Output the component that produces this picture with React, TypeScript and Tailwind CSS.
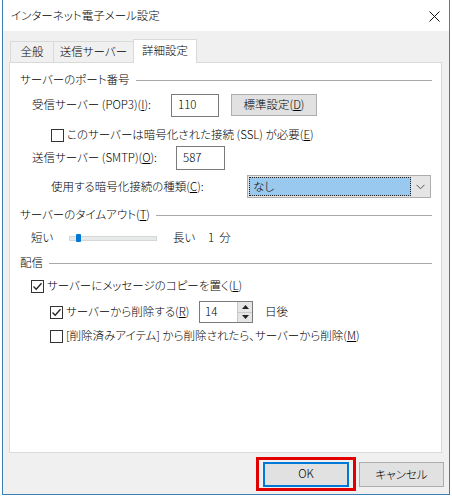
import React from 'react';

const Check = ({ checked }: { checked?: boolean }) => (
  <span className="w-[13px] h-[13px] border border-[#333333] bg-white flex items-center justify-center shrink-0">
    {checked && (
      <svg width="11" height="11" viewBox="0 0 11 11">
        <polyline points="1.5,5.5 4.2,8.3 9.5,2.2" fill="none" stroke="#222" strokeWidth="1.3" />
      </svg>
    )}
  </span>
);

const Heading = ({ children, className = '' }: { children: React.ReactNode; className?: string }) => (
  <div className={`flex items-center h-[18px] pl-[10px] pr-[9px] ${className}`}>
    <span>{children}</span>
    <div className="flex-1 h-px bg-[#a9a9a9] ml-[6px]" />
  </div>
);

export default function App() {
  return (
    <div
      className="w-[452px] h-[496px] bg-white text-[11.5px] font-light leading-none text-black [font-feature-settings:'palt']"
      style={{ fontFamily: '"Noto Sans CJK JP", "Noto Sans", sans-serif' }}
    >
      <div className="ml-[2px] w-[448px] h-[495px] flex flex-col border-x border-b border-[#3c7fb1]">
        {/* Title bar */}
        <div className="h-[31px] bg-white flex items-center justify-between pl-[8px] pr-[8px] shrink-0">
          <span>インターネット電子メール設定</span>
          <svg width="11" height="11" viewBox="0 0 11 11" className="mr-[1px] mt-[1px]">
            <path d="M0.5 0.5 L10.5 10.5 M10.5 0.5 L0.5 10.5" stroke="#111" strokeWidth="1" />
          </svg>
        </div>

        <div className="flex-1 bg-[#f0f0f0] flex flex-col">
          {/* Tabs */}
          <div className="flex items-end h-[31px] ml-[7px] relative z-10">
            <div className="w-[43px] h-[21px] border-t border-l border-[#d9d9d9] bg-[#f0f0f0] flex items-center justify-center">全般</div>
            <div className="w-[80px] h-[21px] border-t border-l border-[#d9d9d9] bg-[#f0f0f0] flex items-center justify-center">送信サーバー</div>
            <div className="w-[64px] h-[24px] -mb-px border-t border-x border-[#d9d9d9] bg-white flex items-center justify-center pb-[2px]">詳細設定</div>
          </div>

          {/* Panel */}
          <div className="ml-[6px] w-[433px] h-[391px] bg-white border border-[#d9d9d9] flex flex-col pt-[8px]">
            <Heading>サーバーのポート番号</Heading>

            <div className="flex items-center h-[24px] mt-[4px] pl-[22px]">
              <span className="w-[139px]">
                受信サーバー (POP3)(<u>I</u>):
              </span>
              <div className="w-[48px] h-[23px] border border-[#7a7a7a] flex items-center pl-[6px]">110</div>
              <div className="ml-[12px] w-[86px] h-[22px] bg-[#e1e1e1] border border-[#adadad] flex items-center justify-center">
                標準設定(<u>D</u>)
              </div>
            </div>

            <div className="flex items-center h-[18px] mt-[9px] pl-[41px] gap-[3px]">
              <Check />
              <span>
                このサーバーは暗号化された接続 (SSL) が必要(<u>E</u>)
              </span>
            </div>

            <div className="flex items-center h-[24px] mt-[2px] pl-[22px]">
              <span className="w-[144px]">
                送信サーバー (SMTP)(<u>O</u>):
              </span>
              <div className="w-[49px] h-[24px] border border-[#7a7a7a] flex items-center pl-[6px]">587</div>
            </div>

            <div className="flex items-center h-[23px] mt-[5px] pl-[41px]">
              <span className="w-[196px]">
                使用する暗号化接続の種類(<u>C</u>):
              </span>
              <div className="w-[184px] h-[23px] border border-[#adadad] bg-[#e5e5e5] flex p-[1px]">
                <div className="flex-1 bg-[#99c9ef] border border-dotted border-[#222] flex items-center pl-[3px]">なし</div>
                <div className="w-[18px] flex items-center justify-center">
                  <svg width="9" height="6" viewBox="0 0 9 6">
                    <polyline points="0.5,0.8 4.5,4.8 8.5,0.8" fill="none" stroke="#555" strokeWidth="1" />
                  </svg>
                </div>
              </div>
            </div>

            <Heading className="mt-[8px]">
              サーバーのタイムアウト(<u>T</u>)
            </Heading>

            <div className="flex items-center h-[18px] mt-[5px] pl-[21px]">
              <span className="w-[38px]">短い</span>
              <div className="relative w-[88px] h-[5px] bg-[#e7eaea] border border-[#d6d6d6]">
                <div className="absolute left-[6px] -top-[3px] w-[5px] h-[8px] bg-[#0078d7] rounded-[1px]" />
              </div>
              <span className="ml-[16px] w-[35px]">長い</span>
              <span>1&nbsp;&nbsp;分</span>
            </div>

            <Heading className="mt-[7px]">配信</Heading>

            <div className="flex items-center h-[18px] mt-[5px] pl-[21px] gap-[3px]">
              <Check checked />
              <span>
                サーバーにメッセージのコピーを置く(<u>L</u>)
              </span>
            </div>

            <div className="flex items-center h-[24px] mt-[5px] pl-[40px]">
              <Check checked />
              <span className="ml-[3px] w-[133px]">
                サーバーから削除する(<u>R</u>)
              </span>
              <div className="w-[54px] h-[22px] border border-[#7a7a7a] flex">
                <div className="flex-1 flex items-center pl-[5px]">14</div>
                <div className="w-[15px] flex flex-col border-l border-[#c8c8c8]">
                  <div className="flex-1 bg-[#e5e5e5] flex items-center justify-center border-b border-[#c8c8c8]">
                    <svg width="7" height="4" viewBox="0 0 7 4">
                      <polygon points="0,4 3.5,0 7,4" fill="#222" />
                    </svg>
                  </div>
                  <div className="flex-1 bg-[#e5e5e5] flex items-center justify-center">
                    <svg width="7" height="4" viewBox="0 0 7 4">
                      <polygon points="0,0 3.5,4 7,0" fill="#222" />
                    </svg>
                  </div>
                </div>
              </div>
              <span className="ml-[12px]">日後</span>
            </div>

            <div className="flex items-center h-[18px] mt-[3px] pl-[40px] gap-[3px]">
              <Check />
              <span>
                [削除済みアイテム] から削除されたら、サーバーから削除(<u>M</u>)
              </span>
            </div>
          </div>

          {/* Buttons */}
          <div className="flex justify-end items-start mt-[4px] pr-[5px]">
            <div className="w-[100px] h-[34px] border-[3px] border-[#e00000] flex items-center justify-center">
              <div className="w-[86px] h-[25px] bg-[#e1e1e1] border-2 border-[#0078d7] flex items-center justify-center">OK</div>
            </div>
            <div className="ml-[3px] mt-[5px] w-[85px] h-[25px] bg-[#e1e1e1] border border-[#adadad] flex items-center justify-center">
              キャンセル
            </div>
          </div>
        </div>
      </div>
    </div>
  );
}
